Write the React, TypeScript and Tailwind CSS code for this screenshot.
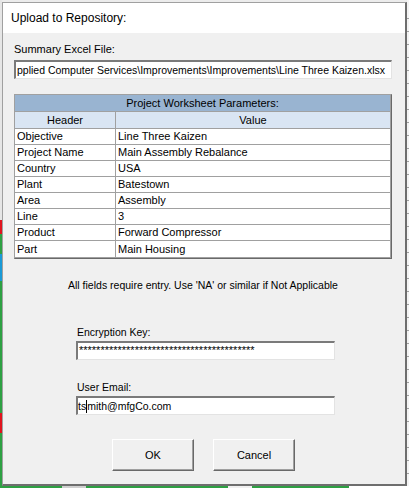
const rows: [string, string][] = [
  ['Objective', 'Line Three Kaizen'],
  ['Project Name', 'Main Assembly Rebalance'],
  ['Country', 'USA'],
  ['Plant', 'Batestown'],
  ['Area', 'Assembly'],
  ['Line', '3'],
  ['Product', 'Forward Compressor'],
  ['Part', 'Main Housing'],
];

function Ticks() {
  return (
    <div className="flex flex-col pt-[6px]">
      {Array.from({ length: 37 }).map((_, i) => (
        <div key={i} className="h-[13px] border-b border-[#a0a0a0]" />
      ))}
    </div>
  );
}

function SunkenBox({ className, children }: { className: string; children: React.ReactNode }) {
  return (
    <div
      className={`flex h-[19px] items-center overflow-hidden border-t-2 border-l-2 border-r border-b border-t-[#7a7a7a] border-l-[#7a7a7a] border-r-[#e3e3e3] border-b-[#e3e3e3] bg-white ${className}`}
    >
      {children}
    </div>
  );
}

function Button({ label }: { label: string }) {
  return (
    <button
      type="button"
      className="h-[32px] w-[82px] border-t border-l border-r border-b border-t-white border-l-white border-r-[#696969] border-b-[#696969] bg-[#f0f0f0] text-[11px] text-black shadow-[inset_-1px_-1px_0_#a0a0a0]"
    >
      {label}
    </button>
  );
}

export default function App() {
  return (
    <div className="flex h-[488px] w-[409px] flex-col overflow-hidden bg-white font-['Liberation_Sans',Arial,sans-serif] text-[10.5px] leading-[13px] text-black">
      <div className="flex h-[486px]">
        {/* sheet behind the dialog, left edge */}
        <div className="flex w-[2px] flex-col">
          <div className="h-[220px] bg-[#e6e6e6]" />
          <div className="h-[14px] bg-[#e0141e]" />
          <div className="h-[20px] bg-[#2ea043]" />
          <div className="h-[27px] bg-[#1a9ad6]" />
          <div className="h-[132px] bg-[#2ea043]" />
          <div className="h-[20px] bg-[#e0141e]" />
          <div className="flex-1 bg-[#2ea043]" />
        </div>

        <div className="flex w-[405px] flex-col">
          <div className="h-[2px] bg-[#ececec]" />
          <div className="flex flex-1 flex-col border-t border-l border-r-2 border-b-2 border-t-[#a0a0a0] border-l-[#a0a0a0] border-r-[#6e6e6e] border-b-[#6e6e6e] bg-[#f0f0f0]">
            <div className="flex h-[30px] items-center bg-white pl-[8px] pt-[1px] text-[12px]">
              Upload to Repository:
            </div>

            <div className="flex flex-col pl-[11px]">
              <div className="mt-[10px] text-[11px]">Summary Excel File:</div>
              <SunkenBox className="mt-[4px] w-[378px] pl-[1px]">
                <span className="whitespace-nowrap">
                  pplied Computer Services\Improvements\Improvements\Line Three Kaizen.xlsx
                </span>
              </SunkenBox>

              <div className="mt-[15px] w-[378px] border-t border-l border-r border-b border-t-[#a0a0a0] border-l-[#a0a0a0] border-r-[#696969] border-b-[#696969]">
                <div className="border-r border-b border-[#a0a0a0] bg-white text-[11px]">
                  <div className="flex h-[17px] items-center justify-center border-b border-[#a0a0a0] bg-[#99b4d1]">
                    Project Worksheet Parameters:
                  </div>
                  <div className="flex h-[17px] border-b border-[#a0a0a0] bg-[#d9e5f3]">
                    <div className="flex w-[101px] items-center justify-center border-r border-[#a0a0a0]">
                      Header
                    </div>
                    <div className="flex flex-1 items-center justify-center">Value</div>
                  </div>
                  {rows.map(([header, value], i) => (
                    <div
                      key={header}
                      className={`flex h-[16px] ${i < rows.length - 1 ? 'border-b border-[#a0a0a0]' : ''}`}
                    >
                      <div className="flex w-[101px] items-center border-r border-[#a0a0a0] pl-[2px]">
                        {header}
                      </div>
                      <div className="flex flex-1 items-center pl-[2px]">{value}</div>
                    </div>
                  ))}
                </div>
              </div>

              <div className="mt-[20px] w-[378px] text-center">
                All fields require entry. Use 'NA' or similar if Not Applicable
              </div>

              <div className="ml-[62px] flex flex-col">
                <div className="mt-[34px] pl-[1px]">Encryption Key:</div>
                <SunkenBox className="mt-[2px] w-[259px] items-start pl-[1px]">
                  <span className="text-[11px] leading-[14px]">{'*'.repeat(41)}</span>
                </SunkenBox>

                <div className="mt-[21px] pl-[1px]">User Email:</div>
                <SunkenBox className="mt-[2px] w-[259px]">
                  <span>ts</span>
                  <span className="h-[13px] w-px bg-black" />
                  <span>mith@mfgCo.com</span>
                </SunkenBox>
              </div>

              <div className="mt-[24px] flex gap-[19px] pl-[98px]">
                <Button label="OK" />
                <Button label="Cancel" />
              </div>
            </div>
          </div>
        </div>

        <div className="w-[2px] bg-[#f4f4f4]">
          <Ticks />
        </div>
      </div>

      {/* sheet behind the dialog, bottom edge */}
      <div className="flex h-[2px]">
        <div className="w-[62px] bg-[#2ea043]" />
        <div className="w-[24px] bg-[#d0d0d0]" />
        <div className="w-[142px] bg-[#2ea043]" />
        <div className="w-[24px] bg-[#f0f0f0]" />
        <div className="w-[97px] bg-[#2ea043]" />
        <div className="flex-1 bg-white" />
      </div>
    </div>
  );
}
